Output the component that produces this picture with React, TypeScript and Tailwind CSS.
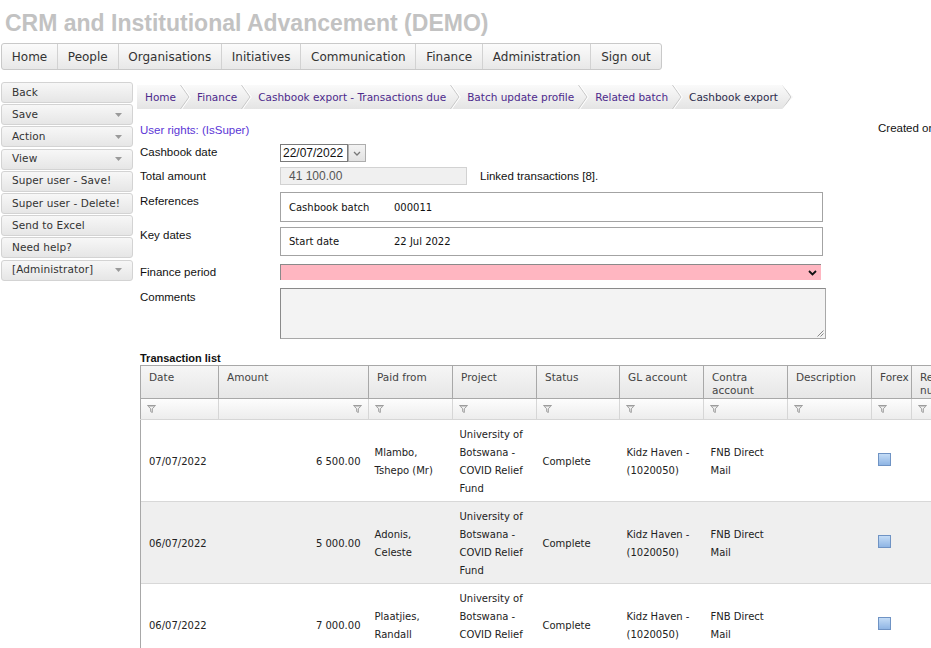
import React from "react";

const UI = "font-['DejaVu_Sans',Verdana,sans-serif]";
const AR = "font-['Liberation_Sans',Arial,sans-serif]";

function Funnel() {
  return (
    <svg width="9" height="8" viewBox="0 0 9 8" className="block">
      <path d="M0.5 0.5H8.5L5.3 3.8V7.5L3.7 6.6V3.8Z" fill="#f4f4f4" stroke="#9c9c9c" strokeWidth="1" strokeLinejoin="round" />
      <path d="M1.5 1.6H7.5" stroke="#c4c4c4" strokeWidth="1" />
    </svg>
  );
}

function Tri() {
  return (
    <svg width="7" height="4" viewBox="0 0 7 4" className="block">
      <path d="M0 0H7L3.5 4Z" fill="#9a9a9a" />
    </svg>
  );
}

function Crumb() {
  return (
    <svg width="11" height="24" viewBox="0 0 11 24" className="block shrink-0">
      <path d="M0.5 0 L9 12 L0.5 24" fill="none" stroke="#c8c8c8" strokeWidth="1" />
      <path d="M1.8 0 L10.3 12 L1.8 24" fill="none" stroke="#ffffff" strokeWidth="1" />
    </svg>
  );
}

const navItems = [
  "Home",
  "People",
  "Organisations",
  "Initiatives",
  "Communication",
  "Finance",
  "Administration",
  "Sign out",
];

const sideItems: { label: string; arrow?: boolean }[] = [
  { label: "Back" },
  { label: "Save", arrow: true },
  { label: "Action", arrow: true },
  { label: "View", arrow: true },
  { label: "Super user - Save!" },
  { label: "Super user - Delete!" },
  { label: "Send to Excel" },
  { label: "Need help?" },
  { label: "[Administrator]", arrow: true },
];

const crumbs = [
  "Home",
  "Finance",
  "Cashbook export - Transactions due",
  "Batch update profile",
  "Related batch",
  "Cashbook export",
];

const cols = [
  { label: "Date", w: 78 },
  { label: "Amount", w: 150, filterRight: true },
  { label: "Paid from", w: 84 },
  { label: "Project", w: 84 },
  { label: "Status", w: 83 },
  { label: "GL account", w: 84 },
  { label: "Contra account", w: 84 },
  { label: "Description", w: 84 },
  { label: "Forex", w: 40 },
  { label: "Reference number", w: 90 },
];

const rows = [
  { date: "07/07/2022", amount: "6 500.00", from: ["Mlambo,", "Tshepo (Mr)"] },
  { date: "06/07/2022", amount: "5 000.00", from: ["Adonis,", "Celeste"] },
  { date: "06/07/2022", amount: "7 000.00", from: ["Plaatjies,", "Randall"] },
];

function Checkbox() {
  return (
    <div className="w-[13px] h-[13px] -mt-[2px] -ml-[1px] border border-[#6f93c4] bg-gradient-to-b from-[#c4dcf6] to-[#8fb5e4]" />
  );
}

export default function App() {
  return (
    <div className="w-[931px] h-[648px] overflow-hidden bg-white text-[#222]">
      {/* Title */}
      <div className={`${AR} pl-[5px] pt-[10px] leading-[26px] text-[23px] font-bold text-[#c2c2c2] whitespace-nowrap`}>
        CRM and Institutional Advancement (DEMO)
      </div>

      {/* Top nav */}
      <div className={`${UI} mt-[7px] ml-[1px] flex w-fit h-[27px] border border-[#c9c9c9] rounded-[3px] bg-gradient-to-b from-[#fbfbfb] to-[#e8e8e8] text-[12px] text-[#333]`}>
        {navItems.map((n, i) => (
          <div
            key={n}
            className={`flex items-center px-[9.8px] whitespace-nowrap ${i < navItems.length - 1 ? "border-r border-[#d2d2d2]" : ""}`}
          >
            {n}
          </div>
        ))}
      </div>

      <div className="flex mt-[12px]">
        {/* Sidebar */}
        <div className={`${UI} ml-[1px] w-[132px] shrink-0 flex flex-col gap-[1.2px] text-[10.5px] text-[#333]`}>
          {sideItems.map((s) => (
            <div
              key={s.label}
              className="h-[21px] flex items-center justify-between pl-[10px] pr-[10px] border border-[#d3d3d3] rounded-[3px] bg-gradient-to-b from-[#f7f7f7] to-[#e6e6e6] tracking-[0.1px] whitespace-nowrap"
            >
              <span>{s.label}</span>
              {s.arrow ? <Tri /> : null}
            </div>
          ))}
        </div>

        {/* Main */}
        <div className="ml-[4px] pt-[3px] w-[900px] shrink-0">
          {/* Breadcrumb */}
          <div className={`${UI} flex items-center h-[24px] w-fit pl-[2px] text-[10.5px] bg-gradient-to-b from-[#fafafa] to-[#e4e4e4] [clip-path:polygon(0_0,calc(100%-11px)_0,100%_50%,calc(100%-11px)_100%,0_100%)]`}>
            {crumbs.map((c, i) => (
              <React.Fragment key={c + i}>
                <span
                  className={`pl-[6px] pr-[4px] pt-[1px] whitespace-nowrap ${i === crumbs.length - 1 ? "text-[#2c2c4c]" : "text-[#4d2a8c]"}`}
                >
                  {c}
                </span>
                <Crumb />
              </React.Fragment>
            ))}
          </div>

          {/* Form */}
          <div className={`${AR} pl-[3px] text-[11.5px] text-[#111]`}>
            <div className="flex mt-[14px] leading-[14px]">
              <div className="w-[738px] text-[#5b36d6]">User rights: (IsSuper)</div>
              <div className="whitespace-nowrap -mt-[2px]">Created on 22/07/2022</div>
            </div>

            {/* Cashbook date */}
            <div className="flex mt-[7px] h-[18px]">
              <div className="w-[140px] pt-[1px] leading-[14px]">Cashbook date</div>
              <div className="flex">
                <div className="w-[68px] h-[18px] border border-[#7a7a7a] flex items-center pl-[2px] text-[12px] text-[#111]">
                  22/07/2022
                </div>
                <div className="w-[18px] h-[18px] border border-[#adadad] bg-gradient-to-b from-[#f3f3f3] to-[#e2e2e2] flex items-center justify-center">
                  <svg width="8" height="5" viewBox="0 0 8 5">
                    <path d="M1 1L4 4L7 1" fill="none" stroke="#777" strokeWidth="1.3" />
                  </svg>
                </div>
              </div>
            </div>

            {/* Total amount */}
            <div className="flex mt-[5px] h-[18px]">
              <div className="w-[140px] pt-[2px] leading-[14px]">Total amount</div>
              <div className="w-[187px] h-[18px] border border-[#d2d2d2] bg-[#f0f0f0] flex items-center pl-[8px] text-[12px] text-[#555]">
                41 100.00
              </div>
              <div className="ml-[13px] pt-[2px] leading-[14px] whitespace-nowrap">Linked transactions [8].</div>
            </div>

            {/* References */}
            <div className="flex mt-[7px]">
              <div className="w-[140px] pt-[2px] leading-[14px]">References</div>
              <div className={`${UI} w-[543px] h-[30px] border border-[#a3a3a3] flex items-center text-[10px] text-[#111]`}>
                <span className="pl-[8px] w-[113px]">Cashbook batch</span>
                <span>000011</span>
              </div>
            </div>

            {/* Key dates */}
            <div className="flex mt-[5px]">
              <div className="w-[140px] pt-[1px] leading-[14px]">Key dates</div>
              <div className={`${UI} w-[543px] h-[29px] border border-[#a3a3a3] flex items-center text-[10px] text-[#111]`}>
                <span className="pl-[8px] w-[113px]">Start date</span>
                <span>22 Jul 2022</span>
              </div>
            </div>

            {/* Finance period */}
            <div className="flex mt-[8px]">
              <div className="w-[140px] pt-[1px] leading-[14px]">Finance period</div>
              <div className="w-[541px] h-[16px] bg-[#ffb6c1] border-t border-l border-[#8a8a8a] flex items-center justify-end pr-[4px]">
                <svg width="9" height="6" viewBox="0 0 9 6">
                  <path d="M1 1L4.5 4.5L8 1" fill="none" stroke="#111" strokeWidth="1.8" />
                </svg>
              </div>
            </div>

            {/* Comments */}
            <div className="flex mt-[8px]">
              <div className="w-[140px] pt-[2px] leading-[14px]">Comments</div>
              <div className="relative w-[546px] h-[51px] bg-[#f3f3f3] border border-[#a8a8a8] border-t-[#8a8a8a] border-l-[#8a8a8a]">
                <svg width="7" height="7" viewBox="0 0 7 7" className="absolute right-[1px] bottom-[1px]">
                  <path d="M6.5 0.5L0.5 6.5M6.5 3.5L3.5 6.5" stroke="#888" strokeWidth="1" />
                </svg>
              </div>
            </div>

            <div className="mt-[13px] leading-[12px] text-[11px] font-bold text-[#111]">Transaction list</div>
          </div>

          {/* Table */}
          <div className="pl-[3px] mt-[1px]">
            <table className={`${UI} table-fixed border-collapse text-[10px] text-[#222]`} style={{ width: 861 }}>
              <colgroup>
                {cols.map((c) => (
                  <col key={c.label} style={{ width: c.w }} />
                ))}
              </colgroup>
              <thead>
                <tr className="h-[33px] bg-gradient-to-b from-[#f6f6f6] to-[#e6e6e6]">
                  {cols.map((c) => (
                    <th
                      key={c.label}
                      className="align-top text-left font-normal text-[10.5px] text-[#444] leading-[13px] pt-[5px] pl-[8px] pr-[2px] border border-[#a8a8a8]"
                    >
                      {c.label}
                    </th>
                  ))}
                </tr>
                <tr className="h-[21px] bg-gradient-to-b from-[#fdfdfd] to-[#ececec]">
                  {cols.map((c) => (
                    <td
                      key={c.label}
                      className="border-l border-r border-b border-[#d6d6d6] first:border-l-[#a8a8a8] px-[6px]"
                    >
                      <div className={`flex ${c.filterRight ? "justify-end" : "justify-start"}`}>
                        <Funnel />
                      </div>
                    </td>
                  ))}
                </tr>
              </thead>
              <tbody>
                {rows.map((r, i) => (
                  <tr key={i} className={`h-[82px] border-b border-[#d8d8d8] ${i % 2 === 1 ? "bg-[#efefef]" : "bg-white"}`}>
                    <td className="pl-[8px] pt-[2px] border-l border-[#a8a8a8] align-middle">{r.date}</td>
                    <td className="pr-[8px] pt-[2px] text-right align-middle">{r.amount}</td>
                    <td className="pl-[6px] pt-[2px] leading-[18px] align-middle">
                      {r.from[0]}
                      <br />
                      {r.from[1]}
                    </td>
                    <td className="pl-[7px] pt-[2px] leading-[18px] align-middle">
                      University of
                      <br />
                      Botswana -
                      <br />
                      COVID Relief
                      <br />
                      Fund
                    </td>
                    <td className="pl-[6px] pt-[2px] align-middle">Complete</td>
                    <td className="pl-[7px] pt-[2px] leading-[18px] align-middle">
                      Kidz Haven -
                      <br />
                      (1020050)
                    </td>
                    <td className="pl-[7px] pt-[2px] leading-[18px] align-middle">
                      FNB Direct
                      <br />
                      Mail
                    </td>
                    <td />
                    <td className="pl-[7px] align-middle">
                      <Checkbox />
                    </td>
                    <td />
                  </tr>
                ))}
              </tbody>
            </table>
          </div>
        </div>
      </div>
    </div>
  );
}
